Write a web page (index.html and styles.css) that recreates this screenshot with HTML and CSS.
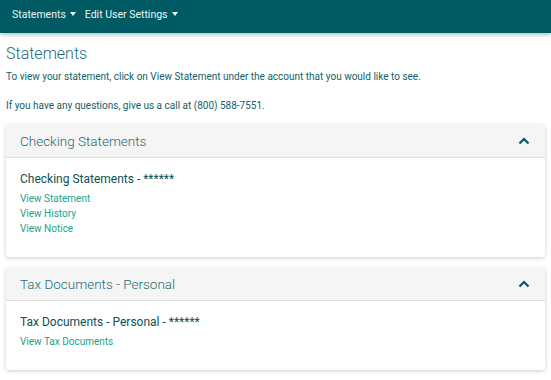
FILE: index.html
```html
<!DOCTYPE html>
<html lang="en">
<head>
    <meta charset="UTF-8">
    <meta name="viewport" content="width=device-width, initial-scale=1.0">
    <title>Statements</title>
    <link rel="stylesheet" href="styles.css">
</head>
<body>
    <nav class="navbar">
        <span class="nav-item">Statements <span class="caret"></span></span>
        <span class="nav-item">Edit User Settings <span class="caret"></span></span>
    </nav>
    <div class="content">
        <h1>Statements</h1>
        <p class="intro">To view your statement, click on View Statement under the account that you would like to see.</p>
        <p class="intro">If you have any questions, give us a call at (800) 588-7551.</p>

        <div class="card">
            <div class="card-header">
                <span>Checking Statements</span>
                <svg class="chevron" width="12" height="8" viewBox="0 0 12 8"><path d="M1.5 6.5 L6 2 L10.5 6.5" fill="none" stroke="#0b5560" stroke-width="2.2"/></svg>
            </div>
            <div class="card-body">
                <h2>Checking Statements - ******</h2>
                <a href="#">View Statement</a>
                <a href="#">View History</a>
                <a href="#">View Notice</a>
            </div>
        </div>

        <div class="card">
            <div class="card-header">
                <span>Tax Documents - Personal</span>
                <svg class="chevron" width="12" height="8" viewBox="0 0 12 8"><path d="M1.5 6.5 L6 2 L10.5 6.5" fill="none" stroke="#0b5560" stroke-width="2.2"/></svg>
            </div>
            <div class="card-body">
                <h2>Tax Documents - Personal - ******</h2>
                <a href="#">View Tax Documents</a>
            </div>
        </div>
    </div>
</body>
</html>
```

FILE: styles.css
```css
body {
    font-family: Roboto, "Liberation Sans", sans-serif;
    margin: 0;
    padding: 0;
    background: #fff;
    color: #11626a;
}
.navbar {
    height: 33px;
    background: #005a64;
    display: flex;
    align-items: center;
    padding: 0 12px;
    gap: 9px;
    box-shadow: 0 2px 4px rgba(0, 0, 0, 0.25);
}
.nav-item {
    color: #eef5f5;
    font-size: 10.5px;
    display: flex;
    align-items: center;
    gap: 4px;
    padding-bottom: 5px;
}
.caret {
    width: 0;
    height: 0;
    border-left: 3.5px solid transparent;
    border-right: 3.5px solid transparent;
    border-top: 4px solid #eef5f5;
}
.content {
    padding: 0 6px;
}
h1 {
    font-size: 16px;
    font-weight: 300;
    color: #1e6c74;
    margin: 11px 0 6px;
}
.intro {
    font-size: 10px;
    margin: 0 0 14px;
    line-height: 15px;
}
.intro + .intro {
    margin-bottom: 12px;
}
.card {
    background: #fff;
    border-radius: 3px;
    box-shadow: 0 1px 4px rgba(0, 0, 0, 0.2);
    margin-bottom: 11px;
}
.card-header {
    height: 32px;
    background: #f5f5f5;
    border-bottom: 1px solid #dcdcdc;
    border-radius: 3px 3px 0 0;
    display: flex;
    align-items: center;
    justify-content: space-between;
    padding: 0 15px 0 14px;
    font-size: 13.5px;
    font-weight: 300;
    color: #1e6c74;
}
.card-body {
    padding: 14px 14px 21px;
    display: flex;
    flex-direction: column;
}
.card-body h2 {
    font-size: 12px;
    font-weight: 400;
    color: #0d4f57;
    margin: 0 0 5px;
}
.card-body a {
    font-size: 10px;
    line-height: 15px;
    color: #19a28c;
    text-decoration: none;
}
```
